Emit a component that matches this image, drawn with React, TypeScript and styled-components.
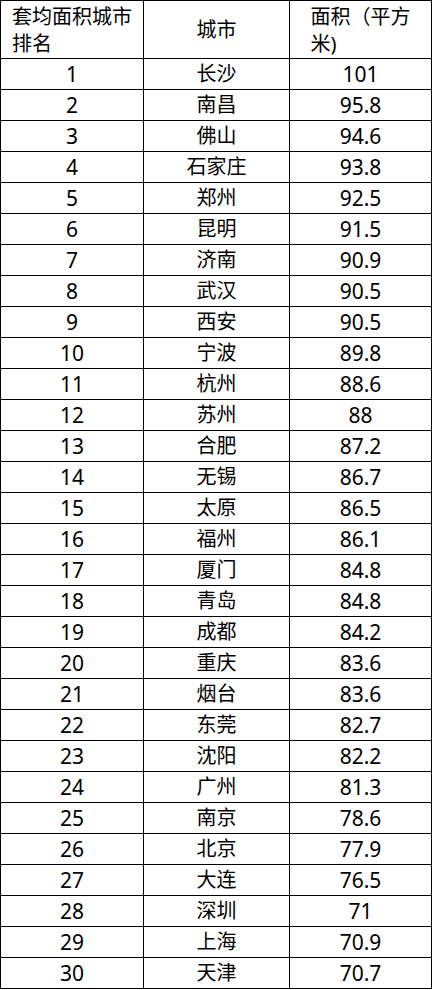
import React from 'react';
import styled, { createGlobalStyle } from 'styled-components';

const GlobalStyle = createGlobalStyle`
  html, body {
    margin: 0;
    padding: 0;
    background: #fff;
  }
  body {
    font-family: "Noto Sans", "Noto Sans CJK SC", sans-serif;
    color: #000;
  }
`;

const Table = styled.div`
  display: grid;
  grid-template-columns: 143px 146px 142px;
  width: 431px;
  border-left: 1px solid #000;
  border-top: 1px solid #000;
  font-size: 20px;
`;

const HeadCell = styled.div`
  display: flex;
  align-items: center;
  justify-content: center;
  height: 57px;
  border-right: 1px solid #000;
  border-bottom: 1px solid #000;
`;

const HeadLabel = styled.span`
  display: inline-block;
  text-align: left;
  line-height: 27px;
`;

const Cell = styled.div<{ $numeric?: boolean }>`
  height: 30px;
  line-height: 30px;
  text-align: center;
  white-space: nowrap;
  font-size: ${p => (p.$numeric ? '21px' : '20px')};
  border-right: 1px solid #000;
  border-bottom: 1px solid #000;
`;

const rows: [string, string][] = [
  ['长沙', '101'],
  ['南昌', '95.8'],
  ['佛山', '94.6'],
  ['石家庄', '93.8'],
  ['郑州', '92.5'],
  ['昆明', '91.5'],
  ['济南', '90.9'],
  ['武汉', '90.5'],
  ['西安', '90.5'],
  ['宁波', '89.8'],
  ['杭州', '88.6'],
  ['苏州', '88'],
  ['合肥', '87.2'],
  ['无锡', '86.7'],
  ['太原', '86.5'],
  ['福州', '86.1'],
  ['厦门', '84.8'],
  ['青岛', '84.8'],
  ['成都', '84.2'],
  ['重庆', '83.6'],
  ['烟台', '83.6'],
  ['东莞', '82.7'],
  ['沈阳', '82.2'],
  ['广州', '81.3'],
  ['南京', '78.6'],
  ['北京', '77.9'],
  ['大连', '76.5'],
  ['深圳', '71'],
  ['上海', '70.9'],
  ['天津', '70.7'],
];

const App = () => (
  <>
    <GlobalStyle />
    <Table>
      <HeadCell>
        <HeadLabel>
          套均面积城市
          <br />
          排名
        </HeadLabel>
      </HeadCell>
      <HeadCell>
        <HeadLabel>城市</HeadLabel>
      </HeadCell>
      <HeadCell>
        <HeadLabel>
          面积（平方
          <br />
          米)
        </HeadLabel>
      </HeadCell>
      {rows.map(([city, area], i) => (
        <React.Fragment key={city}>
          <Cell $numeric>{i + 1}</Cell>
          <Cell>{city}</Cell>
          <Cell $numeric>{area}</Cell>
        </React.Fragment>
      ))}
    </Table>
  </>
);

export default App;
